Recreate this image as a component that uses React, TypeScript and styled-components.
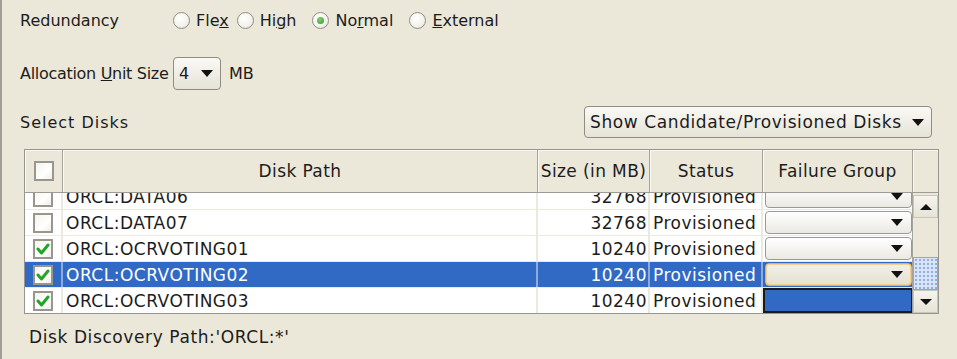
import React from "react";
import styled, { createGlobalStyle } from "styled-components";

const GlobalStyle = createGlobalStyle`
  html, body { margin: 0; padding: 0; background: #ebe8d9; }
  body { font-family: "DejaVu Sans", "Liberation Sans", sans-serif; color: #1c1c1c; }
`;

const Page = styled.div`
  width: 957px;
  height: 359px;
  box-sizing: border-box;
  border-left: 2px solid #a09e96;
  padding-left: 18px;
  display: flex;
  flex-direction: column;
  background: #ebe8d9;
  font-size: 16px;
  overflow: hidden;
`;

const Row = styled.div<{ $h: number; $mt?: number }>`
  display: flex;
  align-items: center;
  height: ${(p) => p.$h}px;
  margin-top: ${(p) => p.$mt ?? 0}px;
`;

const Label = styled.span<{ $w?: number; $ls?: number; $ml?: number }>`
  white-space: nowrap;
  letter-spacing: ${(p) => p.$ls ?? 0}px;
  margin-left: ${(p) => p.$ml ?? 0}px;
  ${(p) => (p.$w ? `width: ${p.$w}px;` : "")}
`;

const RadioOption = styled.label<{ $mr: number }>`
  display: flex;
  align-items: center;
  gap: 6px;
  margin-right: ${(p) => p.$mr}px;
  white-space: nowrap;
`;

const RadioCircle = styled.span<{ $on?: boolean }>`
  width: 17px;
  height: 17px;
  box-sizing: border-box;
  border-radius: 50%;
  border: 1px solid #8f8d86;
  background: radial-gradient(circle at 40% 35%, #ffffff 0%, #f4f3ee 55%, #dcd9cf 100%);
  display: flex;
  align-items: center;
  justify-content: center;
  &::after {
    content: "";
    display: ${(p) => (p.$on ? "block" : "none")};
    width: 7px;
    height: 7px;
    border-radius: 50%;
    background: radial-gradient(circle at 40% 35%, #7fd36a, #2f9a2a);
  }
`;

const Combo = styled.div<{ $w: number; $h: number }>`
  width: ${(p) => p.$w}px;
  height: ${(p) => p.$h}px;
  box-sizing: border-box;
  border: 1px solid #8e8c84;
  border-radius: 4px;
  background: linear-gradient(#faf9f5, #e6e3d6);
  display: flex;
  align-items: center;
  justify-content: space-between;
  padding: 0 7px 0 5px;
  white-space: nowrap;
`;

const ComboText = styled.span<{ $fs?: number; $ls?: number }>`
  font-size: ${(p) => p.$fs ?? 16}px;
  letter-spacing: ${(p) => p.$ls ?? 0}px;
`;

const Arrow = styled.span`
  width: 0;
  height: 0;
  border-left: 6px solid transparent;
  border-right: 6px solid transparent;
  border-top: 7px solid #111;
`;

const SelectRow = styled(Row)`
  width: 912px;
  justify-content: space-between;
`;

const Table = styled.div`
  margin-left: 4px;
  margin-top: 11px;
  width: 915px;
  box-sizing: border-box;
  border: 1px solid #96958f;
  display: flex;
  flex-direction: column;
  font-size: 17px;
`;

const COLS = "38px 475px 112px 113px 150px 25px";

const HeaderRow = styled.div`
  display: grid;
  grid-template-columns: ${COLS};
  height: 42px;
  border-bottom: 1px solid #9c9b94;
  background: #ebe8d9;
  letter-spacing: 0.4px;
`;

const HeadCell = styled.div`
  display: flex;
  align-items: center;
  justify-content: center;
  border-right: 1px solid #a4a39c;
  box-shadow: inset 1px 1px 0 #faf9f3;
  white-space: nowrap;
  &:last-child { border-right: none; }
`;

const Body = styled.div`
  display: flex;
  height: 120px;
`;

const Viewport = styled.div`
  width: 888px;
  overflow: hidden;
  background: #fff;
`;

const DataRow = styled.div<{ $sel?: boolean; $first?: boolean }>`
  display: grid;
  grid-template-columns: 38px 475px 112px 113px 150px;
  height: 26px;
  box-sizing: border-box;
  border-bottom: 1px solid #ece9de;
  margin-top: ${(p) => (p.$first ? -9 : 0)}px;
  background: ${(p) => (p.$sel ? "#316ac5" : "#ffffff")};
  color: ${(p) => (p.$sel ? "#ffffff" : "#1c1c1c")};
  letter-spacing: 0.5px;
`;

const Cell = styled.div<{ $align?: string; $sel?: boolean }>`
  display: flex;
  align-items: center;
  justify-content: ${(p) => p.$align ?? "flex-start"};
  padding: 0 ${(p) => (p.$align === "flex-end" ? 1 : 3)}px 0 3px;
  border-right: 2px solid ${(p) => (p.$sel ? "#8ea9dc" : "#ece9de")};
  white-space: nowrap;
  overflow: hidden;
  box-sizing: border-box;
`;

const CheckCell = styled(Cell)`
  justify-content: center;
  padding: 0;
`;

const FgCell = styled.div`
  display: flex;
  align-items: stretch;
  padding: 1px 1px 1px 2px;
  box-sizing: border-box;
`;

const FgCombo = styled.div<{ $focus?: boolean }>`
  flex: 1;
  box-sizing: border-box;
  border: 1px solid ${(p) => (p.$focus ? "#e8b04c" : "#9a9992")};
  box-shadow: ${(p) => (p.$focus ? "inset 0 0 0 1px #f5d08e" : "none")};
  border-radius: 4px;
  background: ${(p) =>
    p.$focus ? "linear-gradient(#f3f1e8, #e4e0d0)" : "linear-gradient(#ffffff, #ebe9e3)"};
  display: flex;
  align-items: center;
  justify-content: flex-end;
  padding-right: 8px;
`;

const FgEditing = styled.div`
  flex: 1;
  margin: -1px -1px -1px -2px;
  background: #316ac5;
  border: 2px solid #1a1a1a;
`;

const Box = styled.span<{ $size: number }>`
  width: ${(p) => p.$size}px;
  height: ${(p) => p.$size}px;
  box-sizing: border-box;
  border: 2px solid #98968f;
  background: linear-gradient(135deg, #f4f3ec, #ffffff 60%, #f0eee6);
  display: flex;
  align-items: center;
  justify-content: center;
`;

const Scrollbar = styled.div`
  width: 25px;
  border-left: 1px solid #a4a39c;
  display: flex;
  flex-direction: column;
  background: #ebe8d9;
`;

const ScrollGap = styled.div`
  height: 2px;
`;

const ScrollBtn = styled.div`
  height: 23px;
  box-sizing: border-box;
  border: 1px solid #c9c6b8;
  background: linear-gradient(#f5f4ee, #e6e3d6);
  display: flex;
  align-items: center;
  justify-content: center;
`;

const Track = styled.div`
  flex: 1;
  background: #ebe8d9;
`;

const Thumb = styled.div`
  height: 33px;
  box-sizing: border-box;
  border: 1px solid #86a8dc;
  background-color: #d9e5f7;
  background-image: radial-gradient(#8fb0e0 0.8px, transparent 1.2px);
  background-size: 4px 4px;
`;

const SmallArrow = styled.span<{ $up?: boolean }>`
  width: 0;
  height: 0;
  border-left: 6px solid transparent;
  border-right: 6px solid transparent;
  ${(p) => (p.$up ? "border-bottom: 6px solid #111;" : "border-top: 6px solid #111;")}
`;

const Footer = styled.div`
  height: 46px;
  display: flex;
  align-items: center;
  padding-left: 9px;
  font-size: 17px;
  letter-spacing: 0.6px;
`;

const Check = () => (
  <svg width="14" height="14" viewBox="0 0 14 14">
    <polyline points="2,7 5.5,11 12,3" fill="none" stroke="#22a52a" strokeWidth="3" strokeLinecap="round" strokeLinejoin="round" />
  </svg>
);

interface Disk {
  path: string;
  size: number;
  checked: boolean;
  selected?: boolean;
  fg: "plain" | "focus" | "edit";
}

const disks: Disk[] = [
  { path: "ORCL:DATA06", size: 32768, checked: false, fg: "plain" },
  { path: "ORCL:DATA07", size: 32768, checked: false, fg: "plain" },
  { path: "ORCL:OCRVOTING01", size: 10240, checked: true, fg: "plain" },
  { path: "ORCL:OCRVOTING02", size: 10240, checked: true, selected: true, fg: "focus" },
  { path: "ORCL:OCRVOTING03", size: 10240, checked: true, fg: "edit" },
];

const radios = [
  { pre: "Fle", key: "x", post: "", mr: 8 },
  { pre: "Hi", key: "g", post: "h", mr: 16 },
  { pre: "No", key: "r", post: "mal", mr: 16, on: true },
  { pre: "", key: "E", post: "xternal", mr: 0 },
];

export default function App() {
  return (
    <>
      <GlobalStyle />
      <Page>
        <Row $h={42}>
          <Label $w={153}>Redundancy</Label>
          {radios.map((r) => (
            <RadioOption key={r.pre + r.key} $mr={r.mr}>
              <RadioCircle $on={r.on} />
              <span>
                {r.pre}
                <u>{r.key}</u>
                {r.post}
              </span>
            </RadioOption>
          ))}
        </Row>

        <Row $h={33} $mt={16}>
          <Label $w={153} $ls={-0.3}>
            Allocation <u>U</u>nit Size
          </Label>
          <Combo $w={48} $h={33}>
            <span>4</span>
            <Arrow />
          </Combo>
          <Label $ml={8}>MB</Label>
        </Row>

        <SelectRow $h={32} $mt={16}>
          <Label $ls={1}>Select Disks</Label>
          <Combo $w={348} $h={32}>
            <ComboText $fs={17} $ls={0.6}>Show Candidate/Provisioned Disks</ComboText>
            <Arrow />
          </Combo>
        </SelectRow>

        <Table>
          <HeaderRow>
            <HeadCell>
              <Box $size={20} />
            </HeadCell>
            <HeadCell>Disk Path</HeadCell>
            <HeadCell>Size (in MB)</HeadCell>
            <HeadCell>Status</HeadCell>
            <HeadCell>Failure Group</HeadCell>
            <HeadCell />
          </HeaderRow>
          <Body>
            <Viewport>
              {disks.map((d, i) => (
                <DataRow key={d.path} $sel={d.selected} $first={i === 0}>
                  <CheckCell $sel={d.selected}>
                    <Box $size={20}>{d.checked && <Check />}</Box>
                  </CheckCell>
                  <Cell $sel={d.selected}>{d.path}</Cell>
                  <Cell $sel={d.selected} $align="flex-end">
                    {d.size}
                  </Cell>
                  <Cell $sel={d.selected}>Provisioned</Cell>
                  <FgCell>
                    {d.fg === "edit" ? (
                      <FgEditing />
                    ) : (
                      <FgCombo $focus={d.fg === "focus"}>
                        <Arrow />
                      </FgCombo>
                    )}
                  </FgCell>
                </DataRow>
              ))}
            </Viewport>
            <Scrollbar>
              <ScrollGap />
              <ScrollBtn>
                <SmallArrow $up />
              </ScrollBtn>
              <Track />
              <Thumb />
              <ScrollBtn>
                <SmallArrow />
              </ScrollBtn>
            </Scrollbar>
          </Body>
        </Table>

        <Footer>Disk Discovery Path:'ORCL:*'</Footer>
      </Page>
    </>
  );
}
